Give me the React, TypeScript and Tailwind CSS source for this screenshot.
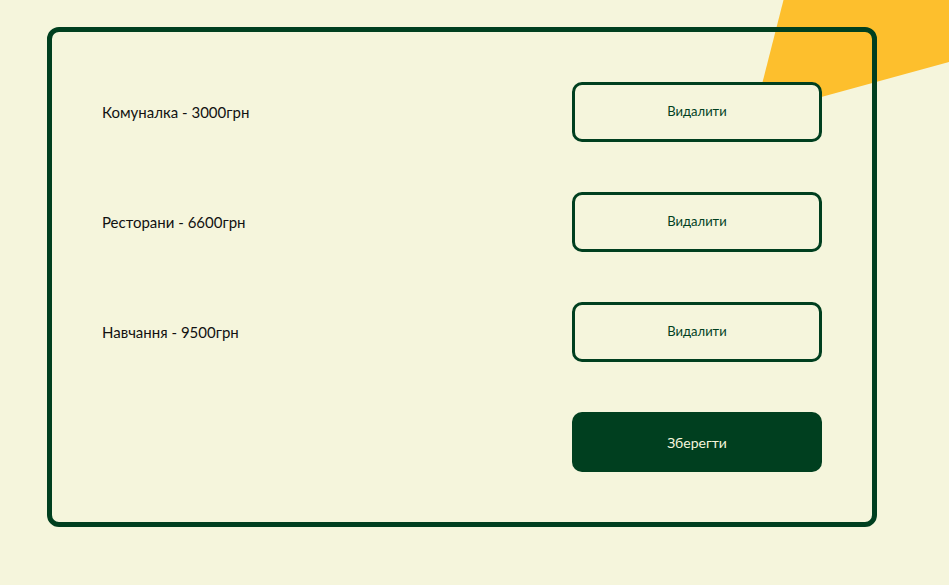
import React from 'react'

type Expense = { name: string; amount: number }

const expenses: Expense[] = [
    { name: 'Комуналка', amount: 3000 },
    { name: 'Ресторани', amount: 6600 },
    { name: 'Навчання', amount: 9500 },
]

const font = { fontFamily: '"Lato", "Noto Sans", sans-serif' }

export default function App() {
    return (
        <div
            className="relative min-h-[585px] overflow-hidden bg-[#f5f5dc] pt-[27px] pl-[47px]"
            style={font}
        >
            {/* yellow decoration in the corner */}
            <svg
                className="absolute top-0 right-0"
                width="196"
                height="116"
                viewBox="753 0 196 116"
            >
                <polygon points="783.5,0 949,0 949,62 754,115.5" fill="#fdbf2d" />
            </svg>

            <div className="relative w-[830px] rounded-[12px] border-[5px] border-[#003f1f] p-[50px]">
                <div className="flex flex-col gap-[50px]">
                    {expenses.map((e) => (
                        <div key={e.name} className="flex items-center justify-between">
                            <span className="text-[15px] text-[#111]">
                                {e.name} - {e.amount}грн
                            </span>
                            <button className="h-[60px] w-[250px] rounded-[10px] border-[3px] border-[#003f1f] bg-[#f5f5dc] text-[13px] text-[#003f1f]">
                                Видалити
                            </button>
                        </div>
                    ))}
                    <div className="flex justify-end">
                        <button className="h-[60px] w-[250px] rounded-[10px] bg-[#003f1f] text-[14px] text-[#f5f5dc]">
                            Зберегти
                        </button>
                    </div>
                </div>
            </div>
        </div>
    )
}
